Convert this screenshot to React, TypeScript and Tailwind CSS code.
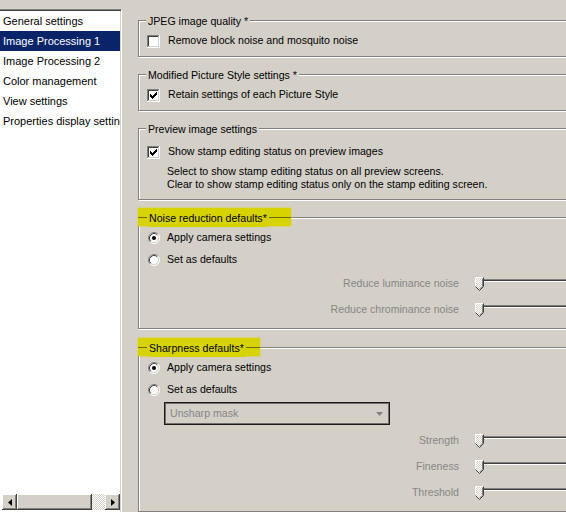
import React from 'react';

const listItems = [
  'General settings',
  'Image Processing 1',
  'Image Processing 2',
  'Color management',
  'View settings',
  'Properties display settings',
];

const Checkbox = ({ checked }: { checked?: boolean }) => (
  <svg width="13" height="13" viewBox="0 0 13 13" className="shrink-0" shapeRendering="crispEdges">
    <rect x="0" y="0" width="13" height="13" fill="#fff" />
    <path d="M0.5 12V0.5H12" stroke="#808080" fill="none" />
    <path d="M1.5 11V1.5H11" stroke="#404040" fill="none" />
    <path d="M1 11.5H11.5V1" stroke="#d4d0c8" fill="none" />
    <path d="M0 12.5H12.5V0" stroke="#fff" fill="none" />
    {checked && (
      <g fill="#000">
        <rect x="3" y="5" width="1" height="3" />
        <rect x="4" y="6" width="1" height="3" />
        <rect x="5" y="7" width="1" height="3" />
        <rect x="6" y="6" width="1" height="3" />
        <rect x="7" y="5" width="1" height="3" />
        <rect x="8" y="4" width="1" height="3" />
        <rect x="9" y="3" width="1" height="3" />
      </g>
    )}
  </svg>
);

const Radio = ({ checked }: { checked?: boolean }) => (
  <svg width="12" height="12" viewBox="0 0 12 12" className="shrink-0">
    <circle cx="6" cy="6" r="5" fill="#fff" />
    <path d="M2.11 9.89A5.5 5.5 0 0 1 9.89 2.11" stroke="#808080" fill="none" />
    <path d="M9.89 2.11A5.5 5.5 0 0 1 2.11 9.89" stroke="#fff" fill="none" />
    <path d="M2.82 9.18A4.5 4.5 0 0 1 9.18 2.82" stroke="#404040" fill="none" />
    <path d="M9.18 2.82A4.5 4.5 0 0 1 2.82 9.18" stroke="#d4d0c8" fill="none" />
    {checked && <circle cx="6" cy="6" r="2" fill="#000" />}
  </svg>
);

const Thumb = () => (
  <svg width="9" height="14" viewBox="0 0 9 14" className="shrink-0">
    <defs>
      <pattern id="chk" width="2" height="2" patternUnits="userSpaceOnUse">
        <rect width="2" height="2" fill="#d4d0c8" />
        <rect width="1" height="1" fill="#fff" />
        <rect x="1" y="1" width="1" height="1" fill="#fff" />
      </pattern>
    </defs>
    <path d="M0.5 0.5H8.5V9.5L4.5 13.5L0.5 9.5Z" fill="url(#chk)" />
    <path d="M0.5 9.5V0.5H8" stroke="#fff" fill="none" />
    <path d="M7.5 1.5V9.2L4.5 12.2" stroke="#808080" fill="none" />
    <path d="M8.5 0.5V9.5L4.5 13.5L0.5 9.5" stroke="#404040" fill="none" />
  </svg>
);

const Slider = ({ label }: { label: string }) => (
  <div className="flex items-center h-[26px]">
    <span className="w-[320px] text-right text-[#868686] whitespace-nowrap">{label}</span>
    <div className="ml-[16px] flex-1 flex items-start">
      <Thumb />
      <div className="flex-1 mt-[2px] h-[3px] bg-[#404040] border-t border-t-[#808080] border-b border-b-white" />
    </div>
  </div>
);

const GroupBox = ({
  title,
  highlight,
  hlWidth,
  className,
  children,
}: {
  title: string;
  highlight?: boolean;
  hlWidth?: string;
  className?: string;
  children?: React.ReactNode;
}) => (
  <div className={`relative shrink-0 border border-[#808080] shadow-[inset_1px_1px_0_#fff,1px_1px_0_#fff] ${className ?? ''}`}>
    {highlight ? (
      <div className={`absolute -top-[10px] -left-[1px] h-[18px] bg-[#d6d300] shadow-[0_0_2px_#d6d300] ${hlWidth}`}>
        <div className="absolute top-[9px] left-0 right-0 h-[1px] bg-[#6a6810]" />
        <span className="absolute top-[1px] left-[9px] px-[2px] bg-[#d6d300] leading-[18px] whitespace-nowrap">{title}</span>
      </div>
    ) : (
      <span className="absolute -top-[7px] left-[7px] px-[2px] bg-[#d4d0c8] leading-[14px] whitespace-nowrap">{title}</span>
    )}
    {children}
  </div>
);

const CheckRow = ({ checked, label }: { checked?: boolean; label: string }) => (
  <div className="flex items-center h-[16px] pl-[8px] gap-[8px]">
    <Checkbox checked={checked} />
    <span className="whitespace-nowrap">{label}</span>
  </div>
);

const RadioRow = ({ checked, label }: { checked?: boolean; label: string }) => (
  <div className="flex items-center h-[22px] pl-[9px] gap-[7px]">
    <Radio checked={checked} />
    <span className="whitespace-nowrap">{label}</span>
  </div>
);

const ScrollBtn = ({ dir }: { dir: 'left' | 'right' }) => (
  <div className="w-[15px] h-full bg-[#d4d0c8] flex items-center justify-center shadow-[inset_-1px_-1px_#404040,inset_1px_1px_#fff,inset_-2px_-2px_#808080]">
    <svg width="4" height="7" viewBox="0 0 4 7">
      {dir === 'left' ? <path d="M4 0V7L0 3.5Z" fill="#000" /> : <path d="M0 0V7L4 3.5Z" fill="#000" />}
    </svg>
  </div>
);

const ListPanel = () => (
  <div className="w-[122px] shrink-0 pt-[9px] flex flex-col text-[11px]">
    <div className="flex-1 flex flex-col bg-white border-t border-t-[#808080] border-r border-r-white shadow-[inset_0_1px_0_#404040,inset_-1px_0_0_#d4d0c8] pt-[1px] pb-[2px] pr-[1px]">
      <div className="flex-1 overflow-hidden">
        {listItems.map((item, i) => (
          <div
            key={item}
            className={`h-[20px] leading-[20px] pl-[3px] whitespace-nowrap ${i === 1 ? 'bg-[#0a246a] text-white' : ''}`}
          >
            {item}
          </div>
        ))}
      </div>
      <div className="h-[16px] flex pl-[2px]">
        <ScrollBtn dir="left" />
        <div className="w-[75px] h-full bg-[#d4d0c8] shadow-[inset_-1px_-1px_#404040,inset_1px_1px_#fff,inset_-2px_-2px_#808080]" />
        <div className="flex-1 h-full bg-[repeating-conic-gradient(#d4d0c8_0_25%,#fff_0_50%)] bg-[length:2px_2px]" />
        <ScrollBtn dir="right" />
      </div>
    </div>
  </div>
);

export default function App() {
  return (
    <div className="w-[566px] h-[512px] overflow-hidden bg-[#d4d0c8] flex text-black font-['Liberation_Sans',Arial,sans-serif]">
      <ListPanel />
      <div className="ml-[16px] w-[440px] shrink-0 pt-[20px] flex flex-col gap-[17px] text-[10.6px]">
        <GroupBox title="JPEG image quality *" className="h-[37px] pt-[12px]">
          <CheckRow label="Remove block noise and mosquito noise" />
        </GroupBox>
        <GroupBox title="Modified Picture Style settings *" className="h-[37px] pt-[12px]">
          <CheckRow checked label="Retain settings of each Picture Style" />
        </GroupBox>
        <GroupBox title="Preview image settings" className="h-[72px] pt-[15px]">
          <CheckRow checked label="Show stamp editing status on preview images" />
          <div className="mt-[5px] pl-[28px] leading-[13px] whitespace-nowrap">
            <div>Select to show stamp editing status on all preview screens.</div>
            <div>Clear to show stamp editing status only on the stamp editing screen.</div>
          </div>
        </GroupBox>
        <GroupBox title="Noise reduction defaults*" highlight hlWidth="w-[153px]" className="h-[112px] pt-[9px]">
          <RadioRow checked label="Apply camera settings" />
          <RadioRow label="Set as defaults" />
          <Slider label="Reduce luminance noise" />
          <Slider label="Reduce chrominance noise" />
        </GroupBox>
        <GroupBox title="Sharpness defaults*" highlight hlWidth="w-[122px]" className="mt-[1px] flex-1 pt-[9px]">
          <RadioRow checked label="Apply camera settings" />
          <RadioRow label="Set as defaults" />
          <div className="mt-[1px] ml-[25px] w-[226px] h-[23px] border border-[#1a1a1a] shadow-[inset_0_0_0_1px_#707070] flex items-center pl-[5px] pr-[6px] text-[#868686]">
            <span className="flex-1">Unsharp mask</span>
            <svg width="7" height="4" viewBox="0 0 7 4">
              <path d="M0 0H7L3.5 4Z" fill="#808080" />
            </svg>
          </div>
          <div className="mt-[3px]">
            <Slider label="Strength" />
            <Slider label="Fineness" />
            <Slider label="Threshold" />
          </div>
        </GroupBox>
      </div>
    </div>
  );
}
